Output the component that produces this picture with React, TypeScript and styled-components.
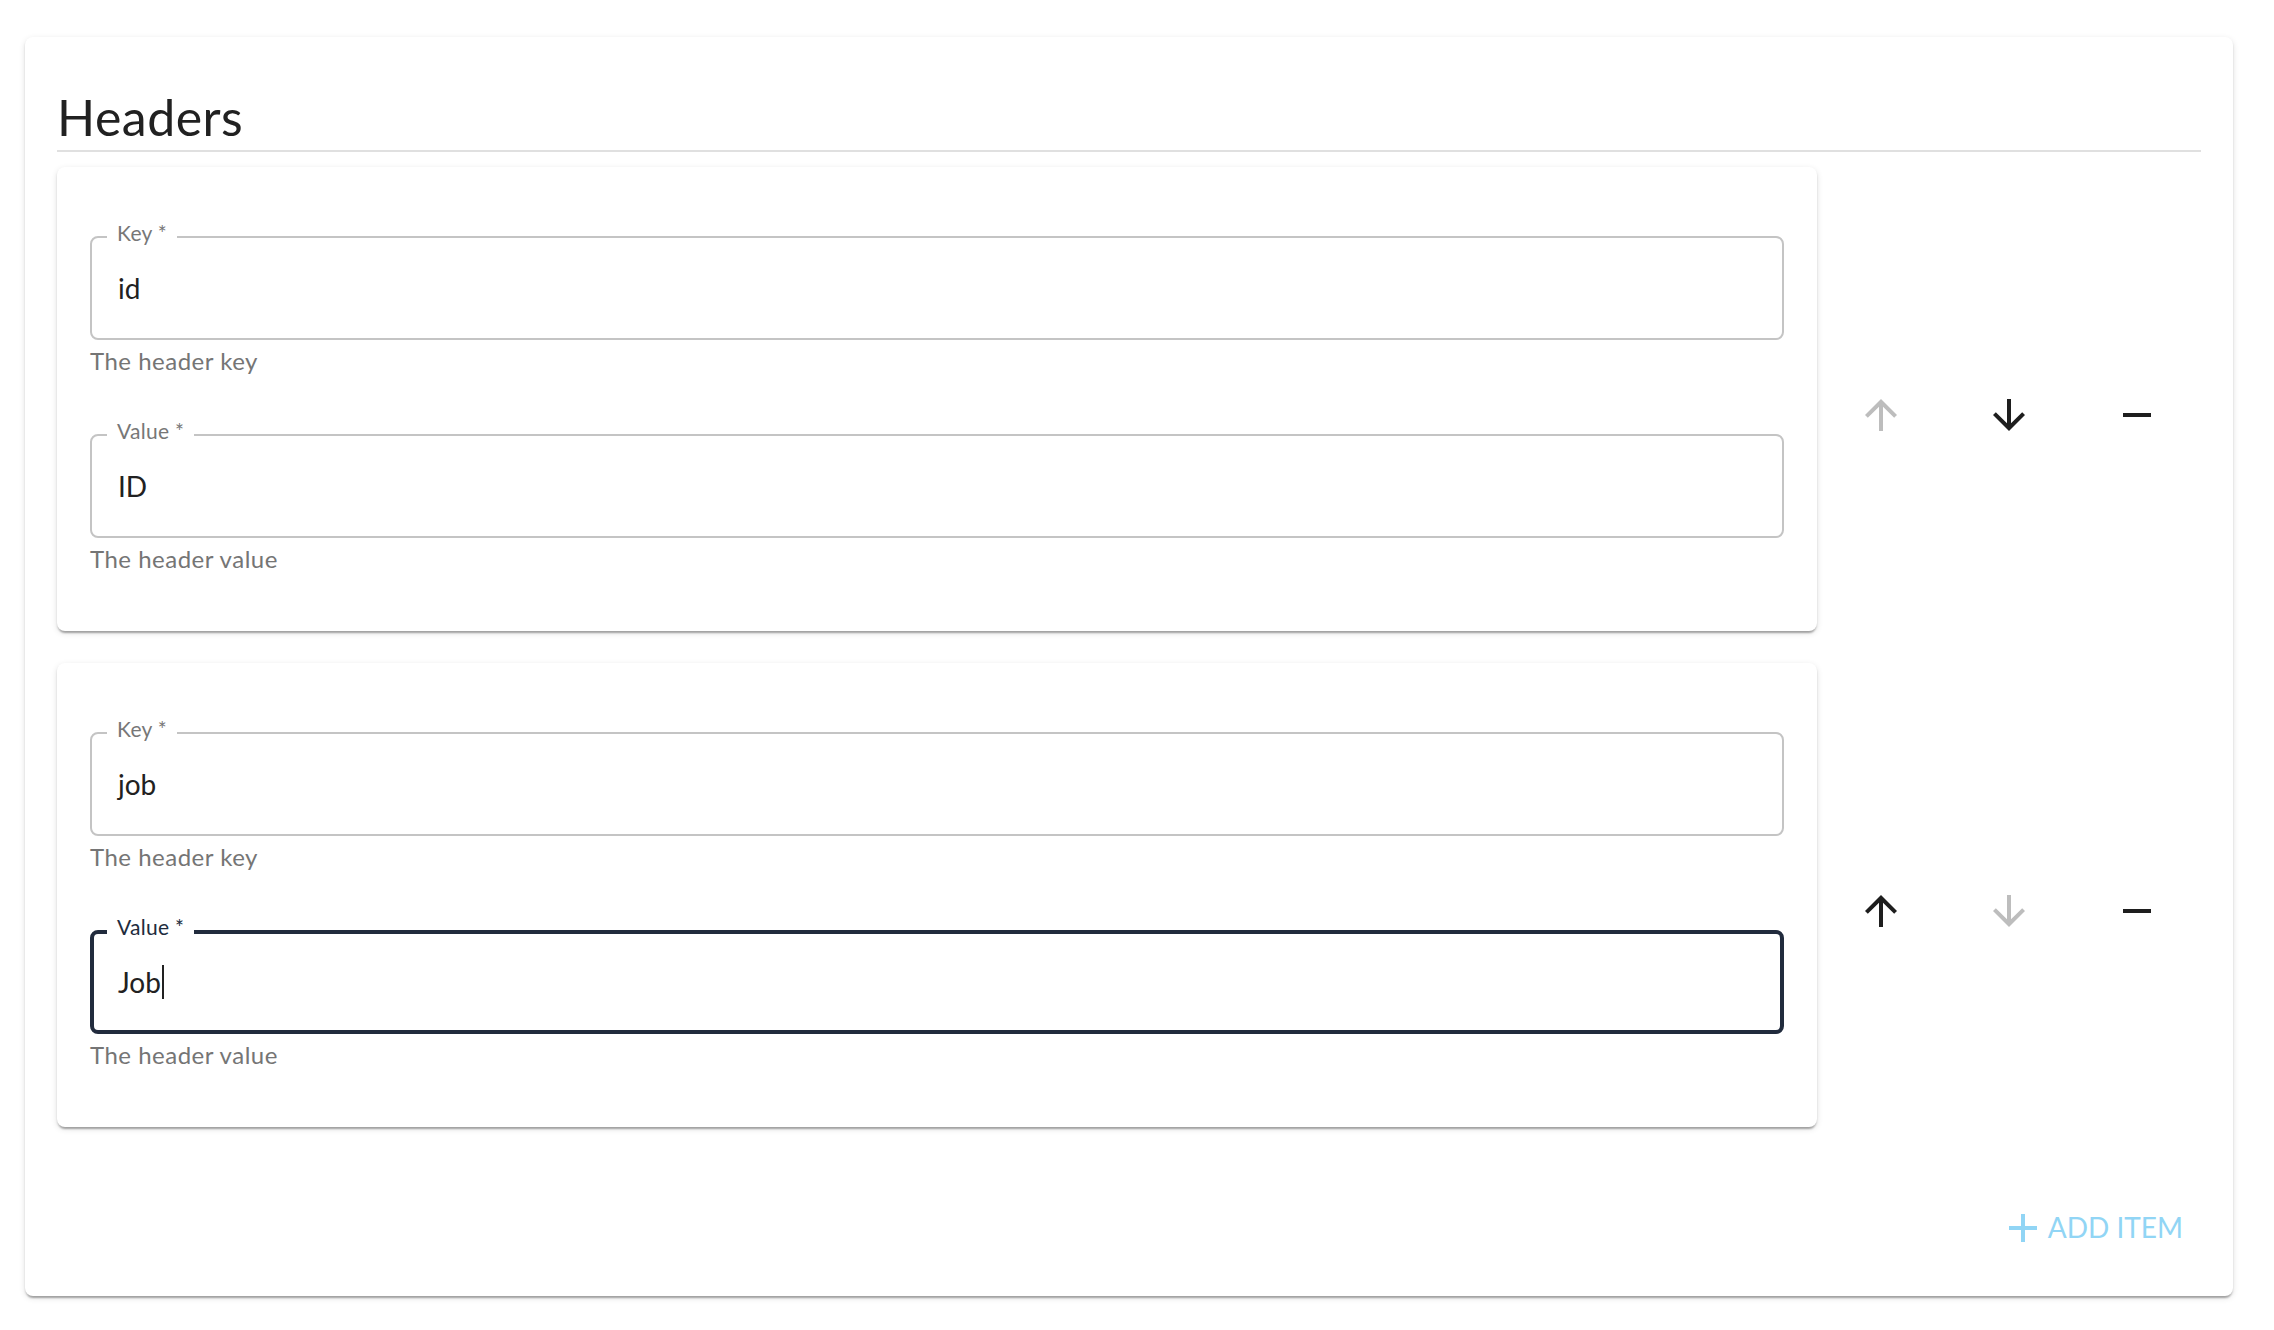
import React from "react";
import styled, { createGlobalStyle, css } from "styled-components";

const GlobalStyle = createGlobalStyle`
  html, body { margin: 0; padding: 0; background: #ffffff; }
  body { font-family: Lato, "Noto Sans", "Liberation Sans", sans-serif; color: #212121; }
  * { box-sizing: border-box; }
`;

const NAVY = "#212b3d";

const Page = styled.div`
  padding: 37px 41px 33px 25px;
`;

const Panel = styled.section`
  background: #fff;
  border-radius: 8px;
  box-shadow: 0 4px 2px -2px rgba(0, 0, 0, 0.2), 0 2px 2px 0 rgba(0, 0, 0, 0.14),
    0 2px 6px 0 rgba(0, 0, 0, 0.12);
  padding: 50px 32px 32px;
`;

const Title = styled.h2`
  margin: 0;
  font-size: 50px;
  line-height: 60px;
  font-weight: 400;
  letter-spacing: 0.5px;
  color: #212121;
  padding-bottom: 3px;
  border-bottom: 2px solid #e0e0e0;
`;

const List = styled.div`
  display: flex;
  flex-direction: column;
  gap: 32px;
  margin-top: 15px;
`;

const Row = styled.div`
  display: flex;
  align-items: center;
`;

const Card = styled.div`
  flex: 1;
  background: #fff;
  border-radius: 8px;
  box-shadow: 0 4px 2px -2px rgba(0, 0, 0, 0.2), 0 2px 2px 0 rgba(0, 0, 0, 0.14),
    0 2px 6px 0 rgba(0, 0, 0, 0.12);
  padding: 69px 33px 56px;
  display: flex;
  flex-direction: column;
  gap: 57px;
`;

const Actions = styled.div`
  display: flex;
  padding-top: 32px;
`;

const ActionCell = styled.div`
  width: 128px;
  display: flex;
  justify-content: center;
`;

const IconBtn = styled.button<{ $disabled?: boolean }>`
  border: none;
  background: transparent;
  padding: 12px;
  border-radius: 50%;
  display: flex;
  align-items: center;
  justify-content: center;
  cursor: ${(p) => (p.$disabled ? "default" : "pointer")};
  color: ${(p) => (p.$disabled ? "#bdbdbd" : "#1e1e1e")};
  svg { display: block; }
`;

const Field = styled.div`
  display: flex;
  flex-direction: column;
`;

const Outline = styled.div<{ $focused?: boolean }>`
  position: relative;
  height: 104px;
  border-radius: 8px;
  display: flex;
  align-items: center;
  ${(p) =>
    p.$focused
      ? css`
          border: 4px solid ${NAVY};
          padding-left: 24px;
        `
      : css`
          border: 2px solid #c4c4c4;
          padding-left: 26px;
        `}
`;

const Label = styled.label<{ $focused?: boolean }>`
  position: absolute;
  top: ${(p) => (p.$focused ? "-19px" : "-17px")};
  left: ${(p) => (p.$focused ? "13px" : "15px")};
  padding: 0 10px;
  background: #fff;
  font-size: 21px;
  line-height: 24px;
  letter-spacing: 0.3px;
  color: ${(p) => (p.$focused ? NAVY : "#777777")};
  white-space: nowrap;
`;

const ValueText = styled.div`
  font-size: 28px;
  line-height: 34px;
  color: #212121;
  display: flex;
  align-items: center;
`;

const Caret = styled.span`
  display: inline-block;
  width: 2px;
  height: 34px;
  background: #222;
  margin-left: 1px;
`;

const Helper = styled.div`
  margin-top: 5px;
  font-size: 24px;
  line-height: 32px;
  letter-spacing: 0.5px;
  color: #757575;
`;

const Footer = styled.div`
  display: flex;
  justify-content: flex-end;
  margin-top: 64px;
`;

const AddButton = styled.button`
  border: none;
  background: transparent;
  font-family: inherit;
  font-size: 28px;
  line-height: 49px;
  padding: 12px 18px 12px 10px;
  color: #91d5f5;
  text-transform: uppercase;
  display: flex;
  align-items: center;
  gap: 11px;
  border-radius: 8px;
  cursor: pointer;
  svg { display: block; }
`;

const ArrowUp = () => (
  <svg width="48" height="48" viewBox="0 0 24 24" fill="currentColor">
    <path d="M4 12l1.41 1.41L11 7.83V20h2V7.83l5.58 5.59L20 12l-8-8-8 8z" />
  </svg>
);

const ArrowDown = () => (
  <svg width="48" height="48" viewBox="0 0 24 24" fill="currentColor">
    <path d="M20 12l-1.41-1.41L13 16.17V4h-2v12.17l-5.58-5.59L4 12l8 8 8-8z" />
  </svg>
);

const Minus = () => (
  <svg width="48" height="48" viewBox="0 0 24 24" fill="currentColor">
    <path d="M19 13H5v-2h14v2z" />
  </svg>
);

const Plus = () => (
  <svg width="28" height="28" viewBox="5 5 14 14" fill="currentColor">
    <path d="M19 13h-6v6h-2v-6H5v-2h6V5h2v6h6v2z" />
  </svg>
);

type FieldProps = { label: string; value: string; helper: string; focused?: boolean };

const TextField = ({ label, value, helper, focused }: FieldProps) => (
  <Field>
    <Outline $focused={focused}>
      <Label $focused={focused}>{label}</Label>
      <ValueText>
        {value}
        {focused && <Caret />}
      </ValueText>
    </Outline>
    <Helper>{helper}</Helper>
  </Field>
);

type Item = { key: string; value: string; focusValue?: boolean };

const items: Item[] = [
  { key: "id", value: "ID" },
  { key: "job", value: "Job", focusValue: true },
];

export default function App() {
  return (
    <>
      <GlobalStyle />
      <Page>
        <Panel>
          <Title>Headers</Title>
          <List>
            {items.map((it, i) => (
              <Row key={it.key}>
                <Card>
                  <TextField label="Key *" value={it.key} helper="The header key" />
                  <TextField
                    label="Value *"
                    value={it.value}
                    helper="The header value"
                    focused={it.focusValue}
                  />
                </Card>
                <Actions>
                  <ActionCell>
                    <IconBtn $disabled={i === 0} aria-label="Move up">
                      <ArrowUp />
                    </IconBtn>
                  </ActionCell>
                  <ActionCell>
                    <IconBtn $disabled={i === items.length - 1} aria-label="Move down">
                      <ArrowDown />
                    </IconBtn>
                  </ActionCell>
                  <ActionCell>
                    <IconBtn aria-label="Remove">
                      <Minus />
                    </IconBtn>
                  </ActionCell>
                </Actions>
              </Row>
            ))}
          </List>
          <Footer>
            <AddButton>
              <Plus />
              Add Item
            </AddButton>
          </Footer>
        </Panel>
      </Page>
    </>
  );
}
